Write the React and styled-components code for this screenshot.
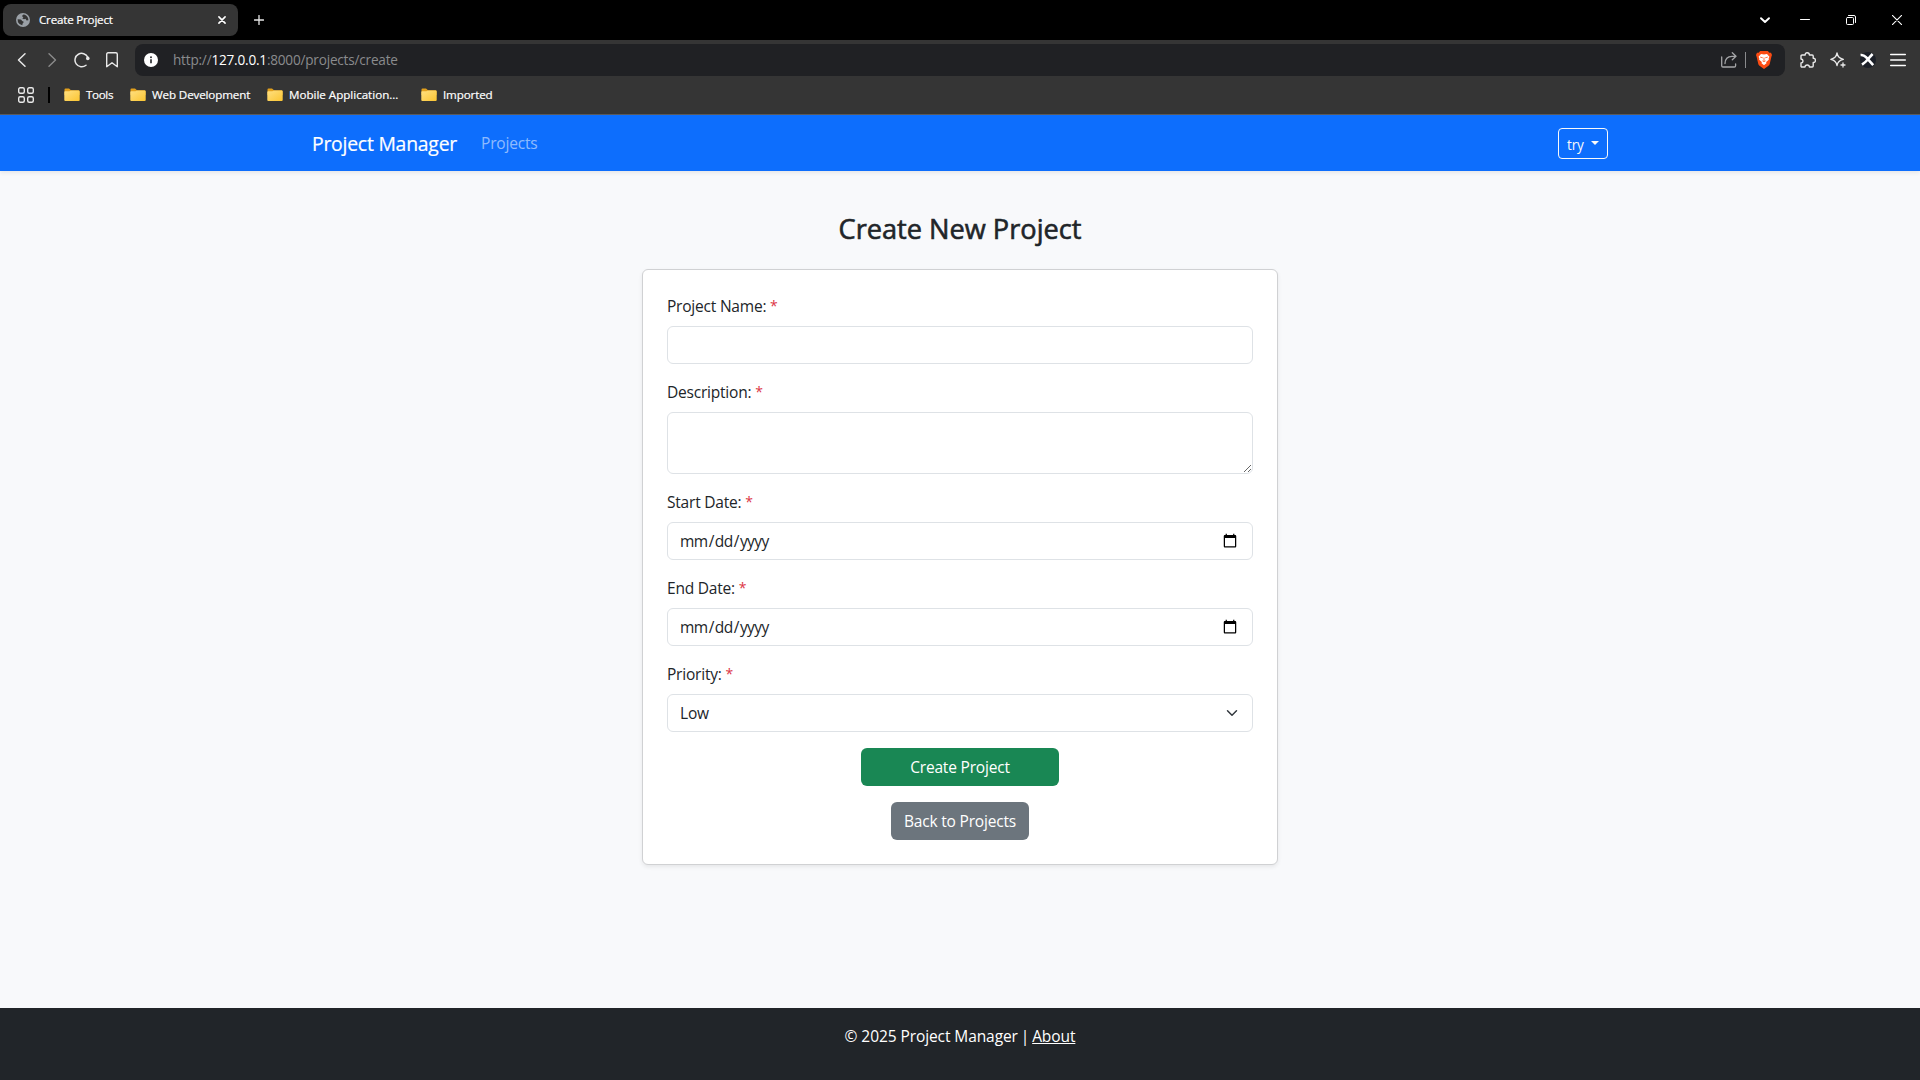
import React from "react";
import styled, { createGlobalStyle, css } from "styled-components";

const type = (size, tracking = -0.012) => css`
  font-size: ${size * 0.97}px;
  letter-spacing: ${tracking}em;
`;

const GlobalStyle = createGlobalStyle`
  *, *::before, *::after { box-sizing: border-box; }
  html, body, #root { height: 100%; }
  body {
    margin: 0;
    overflow: hidden;
    background: #f8f9fb;
    color: #212529;
    font-family: "Open Sans", "Noto Sans", sans-serif;
    line-height: 1.5;
  }
`;

const Window = styled.div`
  display: flex;
  flex-direction: column;
  height: 1080px;
`;

/* ---------- browser chrome ---------- */

const TabStrip = styled.div`
  display: flex;
  align-items: center;
  height: 40px;
  flex: none;
  padding-left: 3px;
  background: #000;
  color: #fff;
`;

const Tab = styled.div`
  display: flex;
  align-items: center;
  width: 235px;
  height: 32px;
  padding: 0 8px 0 13px;
  border-radius: 8px;
  background: #353535;
`;

const TabTitle = styled.span`
  ${type(12, -0.018)}
  flex: 1;
  margin-left: 9px;
  line-height: 16px;
  -webkit-text-stroke: 0.2px currentColor;
`;

const Slot = styled.span`
  display: flex;
  align-items: center;
  justify-content: center;
  flex: none;
  width: ${(p) => p.$w || 30}px;
  height: 32px;
`;

const WindowControls = styled.div`
  display: flex;
  margin-left: auto;
`;

const Toolbar = styled.div`
  display: flex;
  align-items: center;
  flex: none;
  height: 40px;
  padding: 0 7px;
  background: #353535;
`;

const AddressBar = styled.div`
  display: flex;
  align-items: center;
  flex: 1;
  height: 32px;
  margin: 0 8px;
  padding: 0 3px 0 8px;
  border-radius: 8px;
  background: #202124;
`;

const Url = styled.span`
  ${type(14, -0.015)}
  flex: 1;
  margin-left: 14px;
  color: #8a8b8d;
  line-height: 20px;
  b {
    color: #fff;
    font-weight: 400;
  }
`;

const Divider = styled.span`
  width: ${(p) => p.$w}px;
  height: 16px;
  background: ${(p) => p.$color};
`;

const Bookmarks = styled.div`
  display: flex;
  align-items: center;
  flex: none;
  height: 35px;
  padding: 0 0 4px 18px;
  border-bottom: 1px solid #5a5b5d;
  background: #353535;
  color: #fff;
`;

const Bookmark = styled.span`
  ${(p) => type(12, p.$tracking)}
  display: flex;
  align-items: center;
  gap: 6px;
  width: ${(p) => p.$w}px;
  line-height: 16px;
  white-space: nowrap;
  -webkit-text-stroke: 0.2px currentColor;
`;

/* ---------- page ---------- */

const Navbar = styled.nav`
  flex: none;
  height: 56px;
  background: #0d6efd;
  box-shadow: 0 2px 4px rgba(0, 0, 0, 0.075);
`;

const Container = styled.div`
  display: flex;
  align-items: center;
  width: 1320px;
  height: 100%;
  margin: 0 auto;
  padding: 0 12px;
`;

const Brand = styled.a`
  ${type(20, -0.012)}
  width: 161px;
  color: #fff;
  line-height: 30px;
  padding-top: 2px;
  white-space: nowrap;
  -webkit-text-stroke: 0.2px currentColor;
`;

const NavLink = styled.a`
  ${type(16)}
  padding: 10px 8px 8px;
  color: rgba(255, 255, 255, 0.55);
`;

const UserButton = styled.button`
  ${type(14)}
  display: flex;
  align-items: center;
  justify-content: space-between;
  width: 50px;
  height: 31px;
  margin-left: auto;
  padding: 2px 8px 0;
  border: 1px solid #f8f9fa;
  border-radius: 4px;
  background: transparent;
  color: #f8f9fa;
  font-family: inherit;
`;

const Caret = styled.span`
  margin-bottom: 3px;
  border: 4px solid transparent;
  border-top-color: currentColor;
  border-bottom-width: 0;
`;

const Main = styled.main`
  display: flex;
  flex: 1;
  flex-direction: column;
  align-items: center;
  padding-top: 41px;
`;

const Heading = styled.h2`
  ${type(28, 0)}
  margin: 0 0 23px;
  font-weight: 400;
  line-height: 34px;
  -webkit-text-stroke: 0.6px currentColor;
`;

const Card = styled.form`
  display: flex;
  flex-direction: column;
  align-items: center;
  gap: 16px;
  width: 636px;
  padding: 24px;
  border: 1px solid #d0d1d3;
  border-radius: 6px;
  background: #fff;
  box-shadow: 0 2px 4px rgba(0, 0, 0, 0.075);
`;

const Field = styled.label`
  display: flex;
  flex-direction: column;
  gap: 8px;
  width: 100%;
`;

const Label = styled.span`
  ${type(16, -0.014)}
  height: 24px;
  line-height: 25px;
`;

const Required = styled.span`
  color: #dc3545;
  font-size: 14px;
  line-height: 1;
  vertical-align: 1px;
`;

const control = css`
  ${type(16)}
  display: block;
  width: 100%;
  height: 38px;
  margin: 0;
  padding: 6px 12px;
  border: 1px solid #dee2e6;
  border-radius: 6px;
  outline: 0;
  background-color: #fff;
  color: #212529;
  font-family: inherit;
  line-height: 24px;
`;

const Input = styled.input`
  ${control}
`;

const DateInput = styled.input.attrs({ type: "date" })`
  ${control}
  padding-left: 11px;
  letter-spacing: -0.035em;
`;

const TextArea = styled.textarea`
  ${control}
  height: 62px;
  resize: vertical;
`;

const Select = styled.select`
  ${control}
  appearance: none;
  background-image: url("data:image/svg+xml,%3csvg xmlns='http://www.w3.org/2000/svg' viewBox='0 0 16 16'%3e%3cpath fill='none' stroke='%23343a40' stroke-linecap='round' stroke-linejoin='round' stroke-width='2' d='m2 5 6 6 6-6'/%3e%3c/svg%3e");
  background-position: right 12px center;
  background-repeat: no-repeat;
  background-size: 16px 12px;
`;

const Button = styled.button`
  ${type(16)}
  width: ${(p) => p.$w}px;
  height: 38px;
  padding: 0;
  border: 0;
  border-radius: 6px;
  background: ${(p) => p.$color};
  color: #fff;
  font-family: inherit;
  line-height: 24px;
`;

const Footer = styled.footer`
  ${type(16, -0.006)}
  flex: none;
  height: 72px;
  padding-top: 16px;
  background: #212529;
  color: #fff;
  line-height: 25px;
  text-align: center;
  a {
    color: #fff;
    text-decoration: underline;
  }
`;

const Pipe = styled.span`
  margin: 0 -1px;
`;

/* ---------- icons ---------- */

const Icon = ({ size = 16, w = 1.3, color = "#e8e8e8", children, box }) => (
  <svg
    width={size}
    height={size}
    viewBox={box || `0 0 ${size} ${size}`}
    fill="none"
    stroke={color}
    strokeWidth={w}
    strokeLinecap="round"
    strokeLinejoin="round"
  >
    {children}
  </svg>
);

const Globe = () => (
  <Icon size={14}>
    <circle cx="7" cy="7" r="7" fill="#9aa0a6" stroke="none" />
    <path
      d="M1.6 6.2 4.7 6.6Q5.8 7 6 8.1L7.5 8.4Q7.8 10 6.6 10.4L6.3 12.3Q3.4 12 2 9.3ZM7.6 1.5Q6 2 6.2 3.4L7.4 4.3 6.3 5.6 8 6.2 9.5 5.7 10.6 7.4 12.4 7.2Q12.4 3.2 8.9 1.7Z"
      fill="#353535"
      stroke="none"
    />
  </Icon>
);

const Folder = () => (
  <svg width="16" height="16" viewBox="0 0 16 16">
    <defs>
      <linearGradient id="folder" x1="0" y1="0" x2="1" y2="1">
        <stop offset="0" stopColor="#ffe082" />
        <stop offset="1" stopColor="#fbc531" />
      </linearGradient>
    </defs>
    <path d="M.5 2.5Q.5 1.5 1.5 1.5H5L7 3.2H14.4Q15.5 3.2 15.5 4.2V8H.5Z" fill="#e2a01d" />
    <path d="M.3 5Q.3 4.2 1.1 4.2H5.4L7 3.5H14.8Q15.7 3.5 15.7 4.4V13Q15.7 14 14.7 14H1.3Q.3 14 .3 13Z" fill="url(#folder)" />
  </svg>
);

const Shield = () => (
  <Icon size={18}>
    <path
      d="M5.2 0H12.8L14.4 1.8 16 1.7 17 4.1 16.4 5.7 14.7 13Q14.4 14 13.5 14.7L9 18 4.5 14.7Q3.6 14 3.3 13L1.6 5.7 1 4.1 2 1.7 3.6 1.8Z"
      fill="#fb4c13"
      stroke="none"
    />
    <path
      d="M6 3 9 3.6 12 3 14.4 5.8 13.7 7.3 13.8 8.8 10.9 11.2 11.7 12 9 14.2 6.3 12 7.1 11.2 4.2 8.8 4.3 7.3 3.6 5.8Z"
      fill="#fff"
      stroke="none"
    />
    <path d="M5.6 6.2 7.4 6.7M12.4 6.2 10.6 6.7M7.8 10 9 10.7 10.2 10M9 7V9.6" stroke="#fb4c13" strokeWidth=".8" />
  </Icon>
);

const BOOKMARKS = [
  ["Tools", 66, -0.03],
  ["Web Development", 137, -0.012],
  ["Mobile Application...", 154, -0.002],
  ["Imported", 90, -0.012],
];

const BrowserChrome = () => (
  <>
    <TabStrip>
      <Tab>
        <Globe />
        <TabTitle>Create Project</TabTitle>
        <Icon size={16} w={1.6} color="#fff">
          <path d="M4.9 4.9 11.1 11.1M11.1 4.9 4.9 11.1" />
        </Icon>
      </Tab>
      <Slot $w={42}>
        <Icon size={10} w={1.3}>
          <path d="M5 .5V9.5M.5 5H9.5" />
        </Icon>
      </Slot>
      <WindowControls>
        <Slot $w={34}>
          <Icon size={12} w={1.9} color="#fff">
            <path d="M2 4.2 6 8 10 4.2" />
          </Icon>
        </Slot>
        <Slot $w={46}>
          <Icon size={10} w={1} color="#fff">
            <path d="M.5 4.5H9.5" />
          </Icon>
        </Slot>
        <Slot $w={46}>
          <Icon size={10} w={1} color="#fff">
            <rect x=".5" y="2.5" width="7" height="7" rx="1" />
            <path d="M2.5.5H8Q9.5.5 9.5 2V7.5" />
          </Icon>
        </Slot>
        <Slot $w={46}>
          <Icon size={10} w={1.1} color="#fff">
            <path d="M.4.4 9.6 9.6M9.6.4.4 9.6" />
          </Icon>
        </Slot>
      </WindowControls>
    </TabStrip>
    <Toolbar>
      <Slot>
        <Icon w={1.5}>
          <path d="M11 1.7 4.5 8 11 14.3" />
        </Icon>
      </Slot>
      <Slot>
        <Icon w={1.4} color="#8b8b8b">
          <path d="M5 1.7 11.5 8 5 14.3" />
        </Icon>
      </Slot>
      <Slot>
        <Icon w={1.5}>
          <path d="M12 13.2A6.7 6.7 0 1 1 13.8 5.3" />
          <circle cx="13.8" cy="6.4" r="1.8" fill="#e8e8e8" stroke="none" />
        </Icon>
      </Slot>
      <Slot>
        <Icon w={1.4}>
          <path d="M2.7 2.2Q2.7.8 4.1.8H11.9Q13.3.8 13.3 2.2V14.7L8 10.7 2.7 14.7Z" />
        </Icon>
      </Slot>
      <AddressBar>
        <Slot $w={16}>
          <Icon size={14}>
            <circle cx="7" cy="7" r="7" fill="#fff" stroke="none" />
            <path d="M7 6.2V10.3" stroke="#202124" strokeWidth="1.6" strokeLinecap="butt" />
            <circle cx="7" cy="4.2" r=".95" fill="#202124" stroke="none" />
          </Icon>
        </Slot>
        <Url>
          http://<b>127.0.0.1</b>:8000/projects/create
        </Url>
        <Slot $w={32}>
          <Icon w={1.3} color="#a5a6a8">
            <path d="M.7 5V13.7Q.7 15 2 15H13.3Q14.6 15 14.6 13.7V12M4 11.5Q4.2 4.3 11 4.3H14.6M11.3.8 15 4.3 11.3 7.8" />
          </Icon>
        </Slot>
        <Divider $w={1} $color="#8a8b8d" />
        <Slot $w={36}>
          <Shield />
        </Slot>
      </AddressBar>
      <Slot>
        <Icon w={1.4}>
          <path d="M1 4Q1 3 2 3H5.2Q5 .8 7.2.8T9.4 3H12.2Q13.2 3 13.2 4V6.3Q15.4 6.2 15.4 8.4T13.2 10.5V13.9Q13.2 15 12.2 15H9.4Q9.3 13 7.2 13T5 15H2Q1 15 1 13.9V11Q3 10.8 3 9T1 7Z" />
        </Icon>
      </Slot>
      <Slot>
        <Icon w={1.3}>
          <path d="M7 .9Q7.8 6.2 13.4 7.3 7.8 8.4 7 13.6 6.2 8.4.8 7.3 6.2 6.2 7 .9ZM13 11V15M11 13H15" />
        </Icon>
      </Slot>
      <Slot>
        <Icon>
          <circle cx="8" cy="8" r="8" fill="#1c2028" stroke="none" />
          <path d="M.6 3Q3.6 2.6 6 5.2L13.2 13.2M12.6 2 8.4 6.6Q6.4 9.6 2 12.6" stroke="#fff" strokeWidth="2.6" strokeLinecap="butt" />
        </Icon>
      </Slot>
      <Slot>
        <Icon w={1.3} color="#fff">
          <path d="M.6 2.5H15.4M.6 8H15.4M.6 13.5H15.4" />
        </Icon>
      </Slot>
    </Toolbar>
    <Bookmarks>
      <Icon w={1.4}>
        <rect x=".7" y=".7" width="5.6" height="5.6" rx="1.5" />
        <rect x="9.7" y=".7" width="5.6" height="5.6" rx="1.5" />
        <rect x=".7" y="9.7" width="5.6" height="5.6" rx="1.5" />
        <rect x="9.7" y="9.7" width="5.6" height="5.6" rx="1.5" />
      </Icon>
      <Slot $w={30}>
        <Divider $w={2} $color="#000" />
      </Slot>
      {BOOKMARKS.map(([name, width, tracking]) => (
        <Bookmark key={name} $w={width} $tracking={tracking}>
          <Folder />
          {name}
        </Bookmark>
      ))}
    </Bookmarks>
  </>
);

const FormField = ({ label, children }) => (
  <Field>
    <Label>
      {label}: <Required>*</Required>
    </Label>
    {children}
  </Field>
);

export default function App() {
  return (
    <Window>
      <GlobalStyle />
      <BrowserChrome />
      <Navbar>
        <Container>
          <Brand>Project Manager</Brand>
          <NavLink>Projects</NavLink>
          <UserButton>
            try
            <Caret />
          </UserButton>
        </Container>
      </Navbar>
      <Main>
        <Heading>Create New Project</Heading>
        <Card>
          <FormField label="Project Name">
            <Input type="text" />
          </FormField>
          <FormField label="Description">
            <TextArea />
          </FormField>
          <FormField label="Start Date">
            <DateInput />
          </FormField>
          <FormField label="End Date">
            <DateInput />
          </FormField>
          <FormField label="Priority">
            <Select defaultValue="Low">
              <option>Low</option>
              <option>Medium</option>
              <option>High</option>
            </Select>
          </FormField>
          <Button type="button" $w={198} $color="#198754">
            Create Project
          </Button>
          <Button type="button" $w={138} $color="#6c757d">
            Back to Projects
          </Button>
        </Card>
      </Main>
      <Footer>
        © 2025 Project Manager <Pipe>|</Pipe> <a>About</a>
      </Footer>
    </Window>
  );
}
